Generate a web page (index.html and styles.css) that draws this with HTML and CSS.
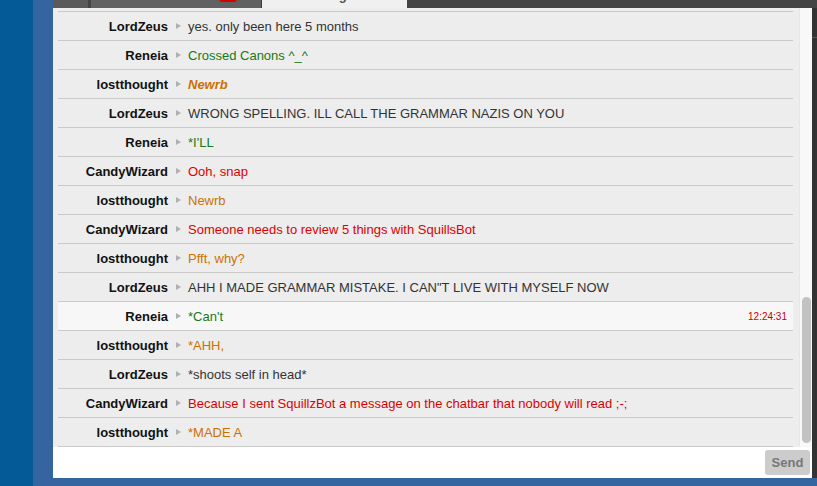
FILE: index.html
```html
<!DOCTYPE html>
<html lang="en">
    <head>
        <meta charset="utf-8">
        <title>Chat</title>
        <link rel="stylesheet" href="styles.css">
    </head>
    <body>
        <div class="desk">
            <div class="window">
                <div class="tabs">
                    <div class="tab tab-first"></div>
                    <div class="tab tab-notes">Notifications <span class="badge">3</span></div>
                    <div class="tab tab-active">Messages</div>
                    <div class="tab-fill"></div>
                </div>
                <div class="main">
                    <div class="panel">
                        <div class="scroll-area">
                            <ul class="log">
                                <li class="row"><span class="name">LordZeus</span><span class="arrow"></span><span class="text c-zeus">yes. only been here 5 months</span></li>
                                <li class="row"><span class="name">Reneia</span><span class="arrow"></span><span class="text c-reneia">Crossed Canons ^_^</span></li>
                                <li class="row"><span class="name">lostthought</span><span class="arrow"></span><span class="text c-lost"><b><i>Newrb</i></b></span></li>
                                <li class="row"><span class="name">LordZeus</span><span class="arrow"></span><span class="text c-zeus">WRONG SPELLING. ILL CALL THE GRAMMAR NAZIS ON YOU</span></li>
                                <li class="row"><span class="name">Reneia</span><span class="arrow"></span><span class="text c-reneia">*I'LL</span></li>
                                <li class="row"><span class="name">CandyWizard</span><span class="arrow"></span><span class="text c-candy">Ooh, snap</span></li>
                                <li class="row"><span class="name">lostthought</span><span class="arrow"></span><span class="text c-lost">Newrb</span></li>
                                <li class="row"><span class="name">CandyWizard</span><span class="arrow"></span><span class="text c-candy">Someone needs to review 5 things with SquillsBot</span></li>
                                <li class="row"><span class="name">lostthought</span><span class="arrow"></span><span class="text c-lost">Pfft, why?</span></li>
                                <li class="row"><span class="name">LordZeus</span><span class="arrow"></span><span class="text c-zeus">AHH I MADE GRAMMAR MISTAKE. I CAN"T LIVE WITH MYSELF NOW</span></li>
                                <li class="row hl"><span class="name">Reneia</span><span class="arrow"></span><span class="text c-reneia">*Can't</span><span class="time">12:24:31</span></li>
                                <li class="row"><span class="name">lostthought</span><span class="arrow"></span><span class="text c-lost">*AHH,</span></li>
                                <li class="row"><span class="name">LordZeus</span><span class="arrow"></span><span class="text c-zeus">*shoots self in head*</span></li>
                                <li class="row"><span class="name">CandyWizard</span><span class="arrow"></span><span class="text c-candy">Because I sent SquillzBot a message on the chatbar that nobody will read ;-;</span></li>
                                <li class="row"><span class="name">lostthought</span><span class="arrow"></span><span class="text c-lost">*MADE A</span></li>
                            </ul>
                            <div class="scrollbar"><div class="thumb"></div></div>
                        </div>
                        <div class="composer">
                            <button class="send">Send</button>
                        </div>
                    </div>
                    <div class="edge"></div>
                </div>
            </div>
        </div>
    </body>
</html>
```

FILE: styles.css
```css
html,body{
    height:486px;
}
body{
    margin:0;
    overflow:hidden;
    background-color:#035a96;
    font-family:"Liberation Sans",Arial,sans-serif;
}
.desk{
    margin-left:33px;
    height:486px;
    box-sizing:border-box;
    padding:0 0 8px 20px;
    background-color:#3465a0;
    display:flex;
    flex-direction:column;
}
.window{
    flex:1;
    min-height:0;
    display:flex;
    flex-direction:column;
}
.tabs{
    height:8px;
    flex-shrink:0;
    display:flex;
    overflow:hidden;
    background-color:#444;
}
.tab{
    position:relative;
    height:30px;
    margin-top:-22px;
    box-sizing:border-box;
    padding-top:10px;
    line-height:16px;
    font-size:13px;
    font-weight:bold;
    white-space:nowrap;
    flex-shrink:0;
}
.tab-first{
    width:38px;
    background-color:#5a5a5a;
    border-right:3px solid #444;
}
.tab-notes{
    width:171px;
    padding-left:31px;
    background-color:#616161;
    color:#bdbdbd;
    border-right:1px solid #3a3a3a;
}
.badge{
    position:absolute;
    left:128px;
    bottom:6px;
    width:18px;
    height:16px;
    border-radius:3px;
    background-color:#d40000;
    color:#fff;
    font-size:11px;
    text-align:center;
}
.tab-active{
    width:145px;
    padding-left:37px;
    background-color:#f0f0f0;
    color:#555;
}
.tab-fill{
    flex:1;
}
.main{
    flex:1;
    min-height:0;
    display:flex;
}
.panel{
    flex:1;
    display:flex;
    flex-direction:column;
}
.edge{
    width:5px;
    background:linear-gradient(#333 29px,#555 29px,#555 30px,#333 30px);
}
.scroll-area{
    flex:1;
    min-height:0;
    display:flex;
    background-color:#ededed;
}
.log{
    flex:1;
    margin:0;
    padding:3px 6px 0 5px;
    list-style:none;
    overflow:hidden;
}
.row{
    display:flex;
    align-items:center;
    height:28px;
    border-bottom:1px solid #cacaca;
    font-size:13px;
}
.row:first-child{
    border-top:1px solid #cacaca;
}
.row.hl{
    background-color:#f7f7f7;
}
.name{
    width:110px;
    flex-shrink:0;
    text-align:right;
    font-weight:bold;
    color:#111;
}
.arrow{
    width:0;
    height:0;
    margin:0 7px 0 8px;
    border-left:5px solid #b0b0b0;
    border-top:3.5px solid transparent;
    border-bottom:3.5px solid transparent;
}
.text{
    flex:1;
    white-space:nowrap;
}
.c-zeus{ color:#333; }
.c-reneia{ color:#167a16; }
.c-lost{ color:#cc7100; }
.c-candy{ color:#dd0000; }
.time{
    margin-right:6px;
    font-size:10px;
    color:#c80000;
}
.scrollbar{
    width:13px;
    border-left:1px solid #e6e6e6;
    background-color:#f8f8f8;
    display:flex;
    flex-direction:column;
    justify-content:flex-end;
    padding:0 1px 4px 2px;
    box-sizing:border-box;
}
.thumb{
    height:146px;
    border-radius:5px;
    background-color:#c2c2c2;
}
.composer{
    height:31px;
    flex-shrink:0;
    display:flex;
    justify-content:flex-end;
    align-items:center;
    padding-right:2px;
    background-color:#fff;
}
.send{
    width:45px;
    height:25px;
    padding:0;
    border:none;
    border-radius:3px;
    background-color:#cccccc;
    color:#777;
    font-family:"Liberation Sans",Arial,sans-serif;
    font-size:13px;
    font-weight:bold;
}
```
